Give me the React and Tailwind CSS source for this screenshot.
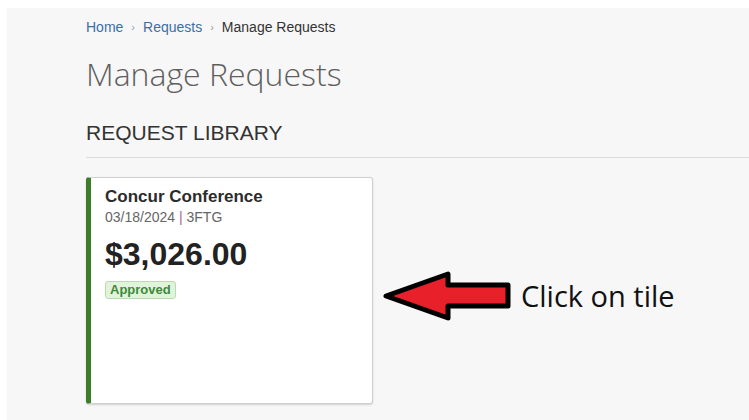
import React from 'react';

const arial = { fontFamily: '"Liberation Sans", Arial, sans-serif' };

const Breadcrumb = () => (
  <nav className="flex items-center gap-[8px] text-[14px] leading-[16px]" style={arial}>
    <a className="text-[#3a6fa8]">Home</a>
    <span className="text-[#999] text-[11px]">›</span>
    <a className="text-[#3a6fa8]">Requests</a>
    <span className="text-[#999] text-[11px]">›</span>
    <span className="text-[#333]">Manage Requests</span>
  </nav>
);

const RequestTile = ({ name, date, code, amount, status }) => (
  <div className="w-[287px] h-[227px] bg-white border border-[#cfcfcf] border-l-[5px] border-l-[#3b7d2a] rounded-[3px] shadow-[0_1px_2px_rgba(0,0,0,0.15)] pl-[14px] pt-[9px] cursor-pointer" style={arial}>
    <div className="text-[17px] leading-[20px] font-bold text-[#2b2b2b]">{name}</div>
    <div className="text-[14px] leading-[16px] text-[#666] mt-[2px]">
      {date} <span className="text-[#9b6a8f]">|</span> {code}
    </div>
    <div className="text-[32px] leading-[36px] font-bold text-[#222] mt-[11px]">{amount}</div>
    <span className="inline-block mt-[9px] px-[4px] h-[18px] leading-[16px] text-[13px] font-bold text-[#3d8a3a] bg-[#e2f3dc] border border-[#b7dcae] rounded-[3px]">
      {status}
    </span>
  </div>
);

// red callout arrow pointing back at the tile
const ArrowLeft = () => (
  <svg width="130" height="50" viewBox="0 0 130 50">
    <polygon
      points="4,25 66,3 66,14 126,14 126,35 66,35 66,47"
      fill="#e8202a"
      stroke="#000"
      strokeWidth="5"
      strokeLinejoin="round"
    />
  </svg>
);

export default function App() {
  return (
    <div className="w-[749px] h-[420px] bg-white pl-[7px] pt-[8px] overflow-hidden">
      <div className="h-full bg-[#f7f7f7] pl-[79px] pt-[11px]">
        <Breadcrumb />
        <h1 className="mt-[20px] text-[32px] leading-[38px] font-light text-[#5f5f5f]" style={{ fontFamily: '"Open Sans", sans-serif' }}>
          Manage Requests
        </h1>
        <h2 className="mt-[28px] text-[21px] leading-[24px] text-[#333]" style={arial}>
          REQUEST LIBRARY
        </h2>
        <div className="mt-[12px] h-px bg-[#dcdcdc]" />
        <div className="mt-[19px] flex items-start">
          <RequestTile name="Concur Conference" date="03/18/2024" code="3FTG" amount="$3,026.00" status="Approved" />
          <div className="flex items-center ml-[9px] mt-[94px]">
            <ArrowLeft />
            <span className="ml-[9px] text-[29px] leading-[34px] text-[#111]" style={{ fontFamily: '"Open Sans", sans-serif' }}>
              Click on tile
            </span>
          </div>
        </div>
      </div>
    </div>
  );
}
